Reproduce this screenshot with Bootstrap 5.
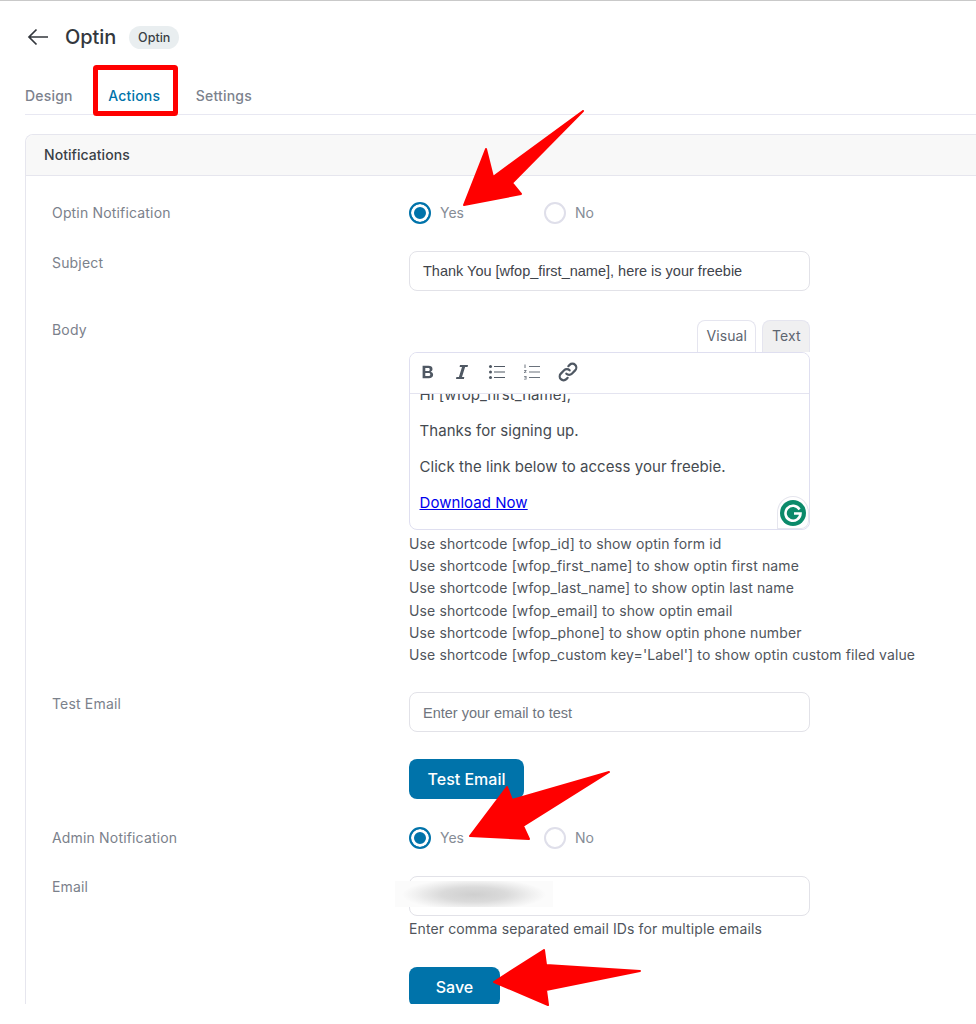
<!DOCTYPE html>
<html lang="en">
<head>
<meta charset="utf-8">
<title>Optin</title>
<link href="https://cdn.jsdelivr.net/npm/bootstrap@5.3.0/dist/css/bootstrap.min.css" rel="stylesheet">
<style>
html,body{margin:0;background:#fff;overflow:hidden}
body{font-family:Inter,"Liberation Sans",sans-serif;width:976px;height:1024px;position:relative;color:#454b54}
.shot{height:1004px;overflow:hidden;border-top:1px solid #c9c9c9;padding-left:25px}
.page-head{height:72px;padding-left:2px;gap:0}
.back-ic{width:22px;height:18px;margin-right:16px}
.page-title{font-size:20px;font-weight:500;color:#33373d;margin:0;line-height:24px;letter-spacing:-.1px}
.type-pill{background:#e9eef0;color:#3a3f46;font-size:12.5px;font-weight:500;border-radius:12px;padding:0 9px;height:23px;line-height:23px;margin-left:13px}
.tabs-row{height:42px;border-bottom:1px solid #e8e8f2;gap:35.5px;padding-top:14px;font-size:14px;font-weight:500;color:#7c828d;letter-spacing:.2px}
.tabs-row span{line-height:17px}
.tab-on{color:#0073aa}
.panel{width:1000px;margin-top:19px;border:1px solid #e6e6ee;border-bottom:0;border-radius:8px 8px 0 0;height:900px}
.panel-head{height:41px;background:#f8f8f8;border-bottom:1px solid #e6e6ee;border-radius:8px 8px 0 0;padding-left:18px;font-size:14px;font-weight:500;line-height:40px;color:#3a3f46;letter-spacing:.05px}
.field{display:flex;padding-left:26px}
.field-label{width:357px;flex:none;font-size:14px;line-height:20px;color:#7b818b;letter-spacing:.17px}
.field-main{width:401px;flex:none}
.radio-ic{width:22px;height:22px;border-radius:50%;border:2px solid #dfdfea;flex:none;background:#fff}
.radio-ic.on{border-color:#0073aa;background:#0073aa;box-shadow:inset 0 0 0 3px #fff}
.radio-set{font-size:14px;line-height:22px;color:#868c96}
.radio-opt{width:135px;gap:9px}
.txt-box{height:40px;border:1px solid #e2e2e8;border-radius:8px;padding:0 13px;font-family:"Liberation Sans",Arial,sans-serif;font-size:14.5px;line-height:39px;color:#3f444b;background:#fff}
.txt-box.ph{color:#6f757e;line-height:41px}
.ed-tabs{height:32px;justify-content:flex-end;gap:6px;font-size:14px;color:#5d6570;letter-spacing:.1px}
.ed-tab{height:32px;line-height:30px;border:1px solid #e5e5ef;border-bottom:0;border-radius:8px 8px 0 0;padding:0 8px}
.ed-tab.alt{background:#f0f0f1;padding:0 8px 0 9px;width:48px}
.editor{height:178px;border:1px solid #dfdff0;border-radius:8px;position:relative;overflow:hidden;background:#fff}
.ed-bar{height:41px;border-bottom:1px solid #e4e4f0;padding:0 0 2px 9px;gap:15px;background:#fff;position:relative;z-index:1}
.ed-bar svg{width:20px;height:20px;display:block}
.ed-body{margin-top:-9px;padding-left:9.5px;font-size:15px;line-height:20px;color:#454a50;letter-spacing:.05px}
.ed-body p{margin:0 0 16px}
.ed-body a{color:#0000ee}
.gram{position:absolute;right:0;bottom:0;width:32px;height:33px;background:#fff;border-radius:50% 50% 8px 0;display:flex;align-items:center;justify-content:center;border:1px solid #e6e6ee}
.gram svg{width:26px;height:26px}
.hint-list{margin-top:3px;font-size:14px;line-height:22.2px;color:#50555c;white-space:nowrap;letter-spacing:.12px}
.act-btn{background:#0073aa;color:#fff;font-weight:500;font-size:16px;border:0;border-radius:8px;height:40px;padding:0;display:block}
.blur-mail{position:absolute;left:-15px;top:4px;width:158px;height:26px;background:radial-gradient(ellipse 72px 16px at 50% 52%,#cfcfcf 0,#dadada 45%,#f0f0f0 80%,#fbfbfb 100%)}
.marks{position:absolute;left:0;top:0;width:976px;height:1024px;pointer-events:none}
</style>
</head>
<body>
<div class="shot">
  <div class="page-head d-flex align-items-center">
    <svg class="back-ic" viewBox="0 0 22 18" fill="none" stroke="#33373d" stroke-width="1.7"><path d="M21 9H2M9.500 1.500 2 9l7.500 7.500"/></svg>
    <h1 class="page-title">Optin</h1>
    <span class="type-pill">Optin</span>
  </div>
  <div class="tabs-row d-flex"><span>Design</span><span class="tab-on">Actions</span><span>Settings</span></div>
  <div class="panel">
    <div class="panel-head">Notifications</div>
    <div class="field" style="margin-top:26px">
      <div class="field-label" style="padding-top:1px">Optin Notification</div>
      <div class="radio-set d-flex">
        <div class="radio-opt d-flex"><span class="radio-ic on"></span>Yes</div>
        <div class="radio-opt d-flex"><span class="radio-ic"></span>No</div>
      </div>
    </div>
    <div class="field" style="margin-top:27px">
      <div class="field-label" style="margin-top:2px">Subject</div>
      <div class="field-main"><div class="txt-box">Thank You [wfop_first_name], here is your freebie</div></div>
    </div>
    <div class="field" style="margin-top:29px">
      <div class="field-label" style="padding-top:0">Body</div>
      <div class="field-main">
        <div class="ed-tabs d-flex"><div class="ed-tab">Visual</div><div class="ed-tab alt">Text</div></div>
        <div class="editor">
          <div class="ed-bar d-flex align-items-center">
            <svg viewBox="0 0 20 20" style="width:18px"><path fill="#4f5863" d="M4 3h6.500c2.800 0 4.500 1.300 4.500 3.600 0 1.500-.8 2.600-2.100 3 1.700.4 2.800 1.600 2.800 3.500 0 2.500-1.900 3.900-4.900 3.900H4zm3 2.500v3.300h3c1.200 0 1.900-.6 1.900-1.700s-.7-1.600-1.900-1.600zm0 5.700v3.300h3.300c1.400 0 2.200-.6 2.200-1.700s-.8-1.600-2.200-1.600z"/></svg>
            <svg viewBox="0 0 20 20"><path fill="#4f5863" d="M8 3h8l-.4 2h-2.500L10 15h2.300l-.4 2H4l.4-2h2.500L10 5H7.600z"/></svg>
            <svg viewBox="0 0 20 20" fill="#4f5863"><circle cx="3.500" cy="4.500" r="1.500"/><circle cx="3.500" cy="10" r="1.500"/><circle cx="3.500" cy="15.500" r="1.500"/><path d="M7 4h11v1H7zM7 9.500h11v1H7zM7 15h11v1H7z"/></svg>
            <svg viewBox="0 0 20 20" fill="#6a727c"><path d="M7 4h11v.9H7zM7 9.500h11v.9H7zM7 15h11v.9H7z"/><path d="M2.500 2.500h1v3.500h-1zM2 8h2.500v.8L3 10.400h1.500v.7H2v-.7l1.500-1.600V8.700H2zM2 14h2.500v3.500H2v-.7h1.700v-.8H2.500v-.6h1.200v-.7H2z"/></svg>
            <svg viewBox="0 0 20 20" fill="none" stroke="#4f5863" stroke-width="2" stroke-linecap="round" style="width:22px;height:22px"><path d="M8.500 11.500a3.500 3.500 0 0 0 5 0l3-3a3.500 3.500 0 0 0-5-5l-1.200 1.200"/><path d="M11.500 8.500a3.500 3.500 0 0 0-5 0l-3 3a3.500 3.500 0 0 0 5 5l1.200-1.200"/></svg>
          </div>
          <div class="ed-body">
            <p>Hi [wfop_first_name],</p>
            <p>Thanks for signing up.</p>
            <p>Click the link below to access your freebie.</p>
            <p><a href="#">Download Now</a></p>
          </div>
          <div class="gram"><svg viewBox="0 0 26 26"><circle cx="13" cy="13" r="13" fill="#0b8a6a"/><path d="M19.500 9.500A7.500 7.500 0 1 0 20.500 13.500H14" fill="none" stroke="#fff" stroke-width="2.600"/></svg></div>
        </div>
        <div class="hint-list">
          <div>Use shortcode [wfop_id] to show optin form id</div>
          <div>Use shortcode [wfop_first_name] to show optin first name</div>
          <div>Use shortcode [wfop_last_name] to show optin last name</div>
          <div>Use shortcode [wfop_email] to show optin email</div>
          <div>Use shortcode [wfop_phone] to show optin phone number</div>
          <div>Use shortcode [wfop_custom key='Label'] to show optin custom filed value</div>
        </div>
      </div>
    </div>
    <div class="field" style="margin-top:26px">
      <div class="field-label" style="margin-top:2px">Test Email</div>
      <div class="field-main">
        <div class="txt-box ph">Enter your email to test</div>
        <button class="act-btn" style="width:115px;margin-top:27px">Test Email</button>
      </div>
    </div>
    <div class="field" style="margin-top:28px">
      <div class="field-label" style="padding-top:1px">Admin Notification</div>
      <div class="radio-set d-flex">
        <div class="radio-opt d-flex"><span class="radio-ic on"></span>Yes</div>
        <div class="radio-opt d-flex"><span class="radio-ic"></span>No</div>
      </div>
    </div>
    <div class="field" style="margin-top:27px">
      <div class="field-label" style="margin-top:1px">Email</div>
      <div class="field-main">
        <div class="txt-box position-relative"><span class="blur-mail"></span></div>
        <div class="hint-list" style="margin-top:2px">Enter comma separated email IDs for multiple emails</div>
        <button class="act-btn" style="width:91px;margin-top:27px">Save</button>
      </div>
    </div>
  </div>
</div>
<svg class="marks" viewBox="0 0 976 1024">
  <rect x="95.500" y="67.500" width="80" height="46" fill="none" stroke="#f00" stroke-width="5" rx="1"/>
  <g fill="#f00" stroke="#f00" stroke-width="2" stroke-linejoin="round">
    <path d="M583 111 493 177 486 149 464 205 521 194 512 183z"/>
    <path d="M609 772 512 800 507 787 470 836 529 839 523 826z"/>
    <path d="M640 971 546 965 544 950 494 982 548 1005 546 990z"/>
  </g>
</svg>
<script src="https://cdn.jsdelivr.net/npm/bootstrap@5.3.0/dist/js/bootstrap.bundle.min.js"></script>
</body>
</html>
